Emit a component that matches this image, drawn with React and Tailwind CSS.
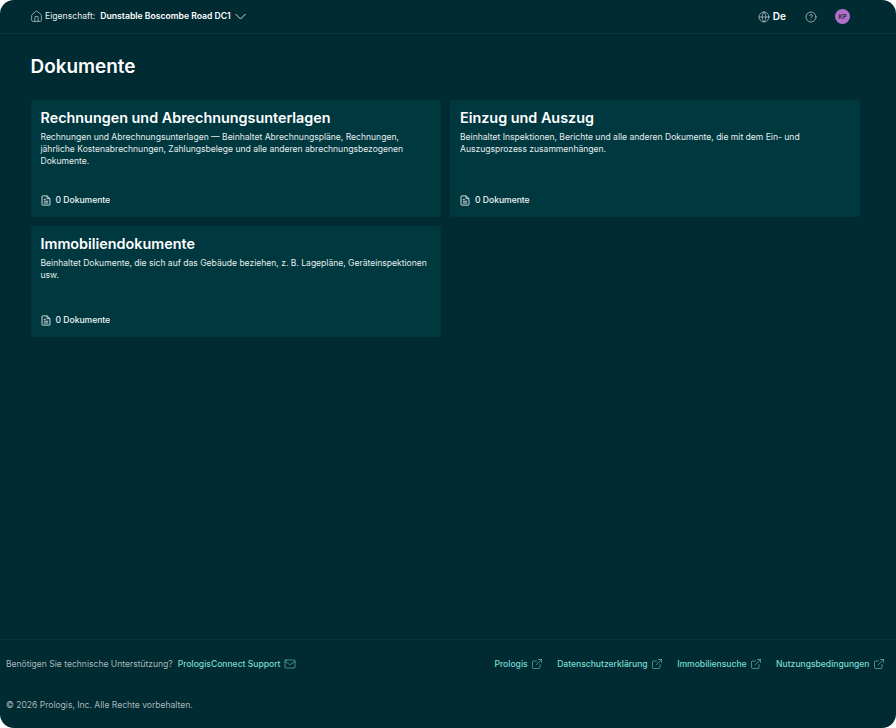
import React from "react";
import { ExternalLink, Globe, CircleHelp, House, Mail } from "lucide-react";

const cards = [
  {
    title: "Rechnungen und Abrechnungsunterlagen",
    text: "Rechnungen und Abrechnungsunterlagen — Beinhaltet Abrechnungspläne, Rechnungen, jährliche Kostenabrechnungen, Zahlungsbelege und alle anderen abrechnungsbezogenen Dokumente.",
    height: "h-[117px]",
  },
  {
    title: "Einzug und Auszug",
    text: "Beinhaltet Inspektionen, Berichte und alle anderen Dokumente, die mit dem Ein- und Auszugsprozess zusammenhängen.",
    height: "h-[117px]",
  },
  {
    title: "Immobiliendokumente",
    text: "Beinhaltet Dokumente, die sich auf das Gebäude beziehen, z. B. Lagepläne, Geräteinspektionen usw.",
    height: "h-[111px]",
  },
];

const links = ["Prologis", "Datenschutzerklärung", "Immobiliensuche", "Nutzungsbedingungen"];

const DocIcon = () => (
  <svg width="10" height="11" viewBox="0 0 10 11" fill="none" stroke="currentColor" strokeWidth="0.9" className="text-[#e3eded]">
    <path d="M1 1.4c0-.3.2-.5.5-.5h4.7L9 3.6v6c0 .3-.2.5-.5.5h-7c-.3 0-.5-.2-.5-.5z" />
    <path d="M6 1v2.6h3M2.8 4.4h2M2.8 6.2h4.4M2.8 8h4.4" />
  </svg>
);

const Card = ({ title, text, height }) => (
  <div className={`${height} flex flex-col rounded-[3px] bg-[#00383f] px-[10px] pt-[8px] pb-[11px]`}>
    <h2 className="text-[14.36px] leading-[20px] font-semibold text-white">{title}</h2>
    <p className="mt-[3px] text-[8.55px] leading-[12px] text-[#e6eeee]">{text}</p>
    <div className="mt-auto flex items-center gap-[5px]">
      <DocIcon />
      <span className="text-[8.55px] leading-[12px] font-medium text-[#f0f5f5]">0 Dokumente</span>
    </div>
  </div>
);

const App = () => {
  return (
    <div className="h-[728px] w-[896px] bg-white font-['Inter',sans-serif]">
      <div className="flex h-full flex-col overflow-hidden rounded-[14px] bg-[#002b33]">
        <header className="flex h-[34px] items-center justify-between border-b border-[#07383f] pr-[46px] pl-[30px]">
          <div className="flex items-center text-[8.65px] text-[#e6eeee]">
            <House size={13} strokeWidth={1.1} />
            <span className="ml-[2px]">Eigenschaft:</span>
            <span className="ml-[5px] font-semibold text-white">Dunstable Boscombe Road DC1</span>
            <svg width="11" height="7" viewBox="0 0 11 7" fill="none" stroke="currentColor" strokeWidth="0.9" className="ml-[4px]">
              <path d="M.5 1 5.5 6l5-5" />
            </svg>
          </div>
          <div className="flex items-center text-[#eef4f4]">
            <Globe size={12} strokeWidth={1.1} />
            <span className="ml-[3px] text-[10px] font-semibold text-white">De</span>
            <CircleHelp size={12} strokeWidth={1.2} className="ml-[19px]" />
            <span className="ml-[18px] flex h-[15px] w-[15px] items-center justify-center rounded-full bg-[#b370c8] text-[6px] font-semibold text-[#1c2b33]">
              KP
            </span>
          </div>
        </header>
        <main className="flex-1 pr-[36px] pl-[30.5px]">
          <h1 className="mt-[21px] text-[18.9px] leading-[24px] font-semibold text-white">Dokumente</h1>
          <div className="mt-[21px] grid grid-cols-2 items-start gap-x-[9.5px] gap-y-[9px]">
            {cards.map((card) => (
              <Card key={card.title} {...card} />
            ))}
          </div>
        </main>
        <footer className="h-[89px] border-t border-[#07333a] pr-[11px] pl-[6px]">
          <div className="mt-[18px] flex items-center justify-between text-[8.55px] leading-[12px]">
            <div className="flex items-center">
              <span className="text-[#a9b8ba]">Benötigen Sie technische Unterstützung?</span>
              <span className="ml-[5px] font-medium text-[#7adccf]">PrologisConnect Support</span>
              <Mail size={12} strokeWidth={1.1} className="ml-[3px] text-[#7adccf]" />
            </div>
            <div className="flex items-center gap-[14px]">
              {links.map((link) => (
                <span key={link} className="flex items-center gap-[3.5px] font-medium text-[#7adccf]">
                  {link}
                  <ExternalLink size={12} strokeWidth={1.1} />
                </span>
              ))}
            </div>
          </div>
          <p className="mt-[29px] text-[8.55px] leading-[12px] text-[#a9b8ba]">© 2026 Prologis, Inc. Alle Rechte vorbehalten.</p>
        </footer>
      </div>
    </div>
  );
};

export default App;
